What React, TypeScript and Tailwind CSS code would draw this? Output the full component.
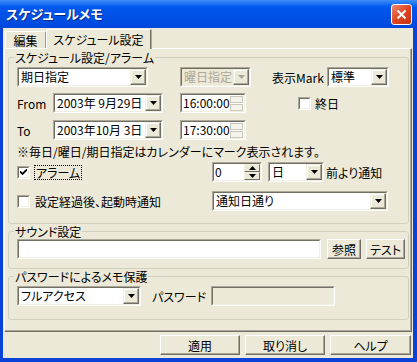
import React from "react";

const FONT = "font-['Noto_Sans_CJK_JP','Noto_Sans',sans-serif] [font-feature-settings:'palt']";

function Arrow({ disabled }: { disabled?: boolean }) {
  return (
    <svg width="7" height="4" viewBox="0 0 7 4">
      <path d="M0 0H7L3.5 4Z" fill={disabled ? "#aca899" : "#000"} />
    </svg>
  );
}

function DropBtn({ disabled }: { disabled?: boolean }) {
  return (
    <div className="flex h-full w-[16px] shrink-0 items-center justify-center border border-t-[#f1efe2] border-l-[#f1efe2] border-b-[#716f64] border-r-[#716f64] bg-[#ece9d8] shadow-[inset_-1px_-1px_0_#aca899,inset_1px_1px_0_#fff]">
      <Arrow disabled={disabled} />
    </div>
  );
}

function Sunken({
  className,
  children,
  disabled,
}: {
  className?: string;
  children?: React.ReactNode;
  disabled?: boolean;
}) {
  return (
    <div
      className={`flex h-[20px] shrink-0 border border-t-[#aca899] border-l-[#aca899] border-b-white border-r-white ${className ?? ""}`}
    >
      <div
        className={`flex min-w-0 flex-1 items-center border border-t-[#716f64] border-l-[#716f64] border-b-[#f1efe2] border-r-[#f1efe2] ${
          disabled ? "bg-[#ece9d8] text-[#aca899]" : "bg-white text-black"
        }`}
      >
        {children}
      </div>
    </div>
  );
}

function Combo({ className, text, disabled }: { className?: string; text: string; disabled?: boolean }) {
  return (
    <Sunken className={className} disabled={disabled}>
      <span className="flex-1 whitespace-nowrap pl-[2px] leading-[16px]">{text}</span>
      <DropBtn disabled={disabled} />
    </Sunken>
  );
}

function Button({ className, children }: { className?: string; children: React.ReactNode }) {
  return (
    <div
      className={`flex h-[20px] shrink-0 items-center justify-center border border-t-white border-l-white border-b-[#716f64] border-r-[#716f64] bg-[#ece9d8] shadow-[inset_-1px_-1px_0_#aca899] ${className ?? ""}`}
    >
      {children}
    </div>
  );
}

function Check({ checked }: { checked?: boolean }) {
  return (
    <div className="flex h-[13px] w-[13px] shrink-0 border border-t-[#aca899] border-l-[#aca899] border-b-white border-r-white">
      <div className="flex flex-1 items-center justify-center border border-t-[#716f64] border-l-[#716f64] border-b-[#f1efe2] border-r-[#f1efe2] bg-white">
        {checked && (
          <svg width="7" height="7" viewBox="0 0 7 7">
            <path d="M0 2.5L2.5 5L7 0.5" stroke="#000" strokeWidth="1.8" fill="none" />
          </svg>
        )}
      </div>
    </div>
  );
}

function TimeBox({ text }: { text: string }) {
  return (
    <Sunken className="w-[66px]">
      <span className="flex-1 whitespace-nowrap pl-[1px] leading-[16px]">{text}</span>
      <div className="mr-[1px] flex h-full w-[15px] flex-col justify-center gap-[1px]">
        <div className="h-[7px] border border-[#c9c7ba] bg-[#f4f3ee]" />
        <div className="h-[7px] border border-[#c9c7ba] bg-[#f4f3ee]" />
      </div>
    </Sunken>
  );
}

function Group({ title, className, children }: { title: string; className?: string; children: React.ReactNode }) {
  return (
    <fieldset
      className={`ml-[3px] w-[401px] rounded-[3px] border border-[#d0d0bf] px-0 ${className ?? ""}`}
    >
      <legend className="ml-[5px] px-[1px] leading-[13px]">{title}</legend>
      <div className="pl-[8px]">{children}</div>
    </fieldset>
  );
}

export default function App() {
  return (
    <div className={`flex h-[362px] w-[417px] flex-col bg-[#0842d6] text-[12px] leading-[13px] text-black ${FONT}`}>
      {/* title bar */}
      <div className="flex h-[28px] shrink-0 items-center bg-linear-to-b from-[#3d8ef8] via-[#0058ee] via-25% to-[#0047dc] pl-[6px] pr-[5px]">
        <span className="flex-1 text-[13px] font-bold leading-[14px] text-white [text-shadow:1px_1px_0_#0b2a8f]">
          スケジュールメモ
        </span>
        <div className="flex h-[21px] w-[21px] items-center justify-center rounded-[3px] border border-white bg-linear-to-br from-[#f0876a] via-[#e0451f] to-[#c2350f]">
          <svg width="11" height="11" viewBox="0 0 11 11">
            <path d="M1.5 1.5L9.5 9.5M9.5 1.5L1.5 9.5" stroke="#fff" strokeWidth="2" />
          </svg>
        </div>
      </div>

      {/* body */}
      <div className="ml-[3px] flex h-[330px] w-[410px] flex-col bg-[#ece9d8]">
        {/* tabs */}
        <div className="relative z-10 ml-[2px] flex h-[21px] items-end">
          <div className="mb-[1px] flex h-[17px] w-[41px] items-center justify-center rounded-t-[2px] border border-b-0 border-t-white border-l-white border-r-[#919b9c] bg-[#ece9d8]">
            編集
          </div>
          <div className="flex h-[20px] w-[105px] items-center justify-center rounded-t-[2px] border border-b-0 border-t-white border-l-white border-r-[#716f64] bg-[#ece9d8] shadow-[1px_0_0_#aca899]">
            スケジュール設定
          </div>
        </div>

        {/* tab panel */}
        <div className="ml-[1px] mt-[-1px] flex h-[284px] w-[408px] flex-col border border-t-white border-l-white border-b-[#716f64] border-r-[#716f64] shadow-[inset_-1px_-1px_0_#aca899]">
          <Group title="スケジュール設定/アラーム" className="mt-[2px] h-[173px]">
            <div className="mt-[3px] flex items-center">
              <Combo className="w-[131px]" text="期日指定" />
              <Combo className="ml-[32px] w-[71px]" text="曜日指定" disabled />
              <span className="ml-[21px] w-[55px]">表示Mark</span>
              <Combo className="w-[62px]" text="標準" />
            </div>
            <div className="mt-[6px] flex items-center">
              <span className="w-[36px]">From</span>
              <Combo className="w-[110px]" text="2003年 9月29日" />
              <div className="ml-[17px]">
                <TimeBox text="16:00:00" />
              </div>
              <div className="ml-[52px]">
                <Check />
              </div>
              <span className="ml-[4px]">終日</span>
            </div>
            <div className="mt-[7px] flex items-center">
              <span className="w-[36px]">To</span>
              <Combo className="w-[110px]" text="2003年10月 3日" />
              <div className="ml-[17px]">
                <TimeBox text="17:30:00" />
              </div>
            </div>
            <div className="mt-[5px]">※毎日/曜日/期日指定はカレンダーにマーク表示されます。</div>
            <div className="mt-[4px] flex items-center">
              <div className="flex w-[195px] items-center">
                <Check checked />
                <span className="ml-[4px] border border-dotted border-black px-[1px]">アラーム</span>
              </div>
              <Sunken className="w-[50px]">
                <span className="flex-1 pl-[1px] leading-[16px]">0</span>
                <div className="flex h-full w-[16px] flex-col">
                  <div className="flex flex-1 items-center justify-center border border-t-[#f1efe2] border-l-[#f1efe2] border-b-[#716f64] border-r-[#716f64] bg-[#ece9d8]">
                    <svg width="7" height="4" viewBox="0 0 7 4">
                      <path d="M0 4H7L3.5 0Z" fill="#000" />
                    </svg>
                  </div>
                  <div className="flex flex-1 items-center justify-center border border-t-[#f1efe2] border-l-[#f1efe2] border-b-[#716f64] border-r-[#716f64] bg-[#ece9d8]">
                    <Arrow />
                  </div>
                </div>
              </Sunken>
              <Combo className="ml-[6px] w-[56px]" text="日" />
              <span className="ml-[2px]">前より通知</span>
            </div>
            <div className="mt-[9px] flex items-center">
              <div className="flex w-[195px] items-center">
                <Check />
                <span className="ml-[5px]">設定経過後、起動時通知</span>
              </div>
              <Combo className="w-[176px]" text="通知日通り" />
            </div>
          </Group>

          <Group title="サウンド設定" className="mt-[1px] h-[44px]">
            <div className="mt-[1px] flex items-center">
              <Sunken className="w-[304px]" />
              <Button className="ml-[6px] w-[34px]">参照</Button>
              <Button className="ml-[5px] w-[39px]">テスト</Button>
            </div>
          </Group>

          <Group title="パスワードによるメモ保護" className="mt-[1px] h-[50px]">
            <div className="mt-[3px] flex items-center">
              <Combo className="w-[124px]" text="フルアクセス" />
              <span className="ml-[11px] w-[59px]">パスワード</span>
              <Sunken className="w-[124px]" disabled />
            </div>
          </Group>
        </div>

        {/* buttons */}
        <div className="mt-[3px] flex items-center">
          <Button className="ml-[157px] w-[80px]">適用</Button>
          <Button className="ml-[5px] w-[80px]">取り消し</Button>
          <Button className="ml-[5px] w-[81px]">ヘルプ</Button>
        </div>
      </div>
    </div>
  );
}
